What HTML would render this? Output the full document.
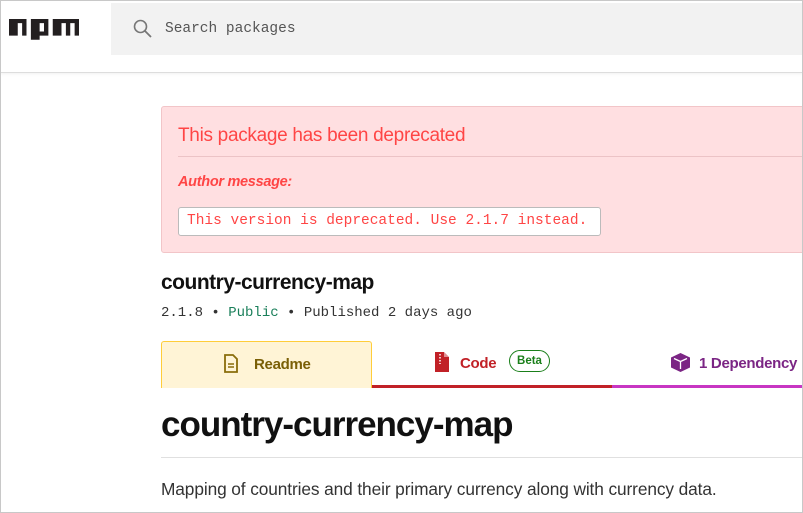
<!DOCTYPE html>
<html><head><meta charset="utf-8"><style>
*{margin:0;padding:0;box-sizing:border-box}
html,body{width:803px;height:513px;overflow:hidden;background:#fff;font-family:"Liberation Sans",sans-serif}
.frame{position:absolute;left:0;top:0;width:803px;height:513px;border:1px solid #c8c8c8;pointer-events:none;z-index:10}
.hdr{position:absolute;left:0;top:0;width:803px;height:73px;border-bottom:1px solid #ddd;box-shadow:0 1px 3px rgba(0,0,0,.06)}
.search{position:absolute;left:111px;top:3px;width:692px;height:52px;background:#f2f2f2}
.search span{position:absolute;left:54px;top:18px;font-family:"Liberation Mono",monospace;font-size:14.5px;color:#555}
.dep{position:absolute;left:161px;top:106px;width:660px;height:147px;background:#ffdfe1;border:1px solid #f2c5c8;border-radius:3px}
.dep h3{position:absolute;left:16px;top:18px;font-weight:normal;font-size:19px;color:#ff4545;letter-spacing:-.3px}
.dep .hr{position:absolute;left:16px;top:49px;right:0;border-top:1px solid #ecc3c6}
.dep .am{position:absolute;left:16px;top:67px;font-style:italic;font-weight:bold;font-size:14.5px;color:#ff4545;letter-spacing:-.3px}
.dep .code{position:absolute;left:16px;top:100px;width:423px;height:29px;background:#fff;border:1px solid #bbb;border-radius:3px;font-family:"Liberation Mono",monospace;font-size:14.5px;color:#ff4545;padding:5px 0 0 8px;white-space:nowrap}
.t1{position:absolute;left:161px;top:271px;font-weight:bold;font-size:21px;color:#111;letter-spacing:-.5px}
.meta{position:absolute;left:161px;top:305px;font-family:"Liberation Mono",monospace;font-size:14px;color:#333;white-space:nowrap}
.tab{position:absolute;top:341px;height:47px}
.readme{left:161px;width:211px;background:#fff4d6;border:1px solid #ffcd3a;border-bottom:none;border-radius:3px 3px 0 0}
.code-t{left:372px;width:240px;border-bottom:3px solid #c12127}
.dep-t{left:612px;width:191px;border-bottom:3px solid #c836c3}
.lbl{position:absolute;top:14px;font-weight:bold;font-size:15px;letter-spacing:-.3px}
.beta{position:absolute;left:137px;top:9px;width:41px;height:22px;border:1.5px solid #1a7f1a;border-radius:11px;color:#1a7f1a;font-size:11.5px;font-weight:bold;display:flex;align-items:center;justify-content:center}
.h1{position:absolute;left:161px;top:405px;font-weight:bold;font-size:35px;color:#111;letter-spacing:-1px}
.hr2{position:absolute;left:161px;top:457px;width:642px;border-top:1px solid #e0e0e0}
.p{position:absolute;left:161px;top:479px;font-size:17.3px;color:#333;letter-spacing:-.1px;white-space:nowrap}
</style></head><body>
<div class="hdr">
<svg style="position:absolute;left:9px;top:19px" width="70" height="22" viewBox="1 1 16 5.3" preserveAspectRatio="none"><path fill="#231f20" fill-rule="evenodd" d="M1,5h2V2h1v3h1V1H1z M6,1v5h2V5h2V1z M8,2h1v2H8z M11,1v4h2V2h1v3h1V2h1v3h1V1z"/></svg>
<div class="search">
<svg style="position:absolute;left:22px;top:16px" width="19" height="19" viewBox="0 0 19 19"><circle cx="7.5" cy="7.5" r="6" fill="none" stroke="#777" stroke-width="1.6"/><path d="M12 12l6 6" stroke="#777" stroke-width="1.8"/></svg>
<span>Search packages</span></div>
</div>
<div class="dep"><h3>This package has been deprecated</h3><div class="hr"></div><div class="am">Author message:</div><div class="code">This version is deprecated. Use 2.1.7 instead.</div></div>
<div class="t1">country-currency-map</div>
<div class="meta">2.1.8 • <span style="color:#1a7f5a">Public</span> • Published 2 days ago</div>
<div class="tab readme">
<svg style="position:absolute;left:62px;top:12px" width="14" height="19" viewBox="0 0 14 19"><path d="M1 1h8l4 4v13H1z" fill="none" stroke="#8a6d0b" stroke-width="1.8"/><path d="M4 10h6M4 13h6" stroke="#8a6d0b" stroke-width="1.6"/></svg>
<span class="lbl" style="left:92px;color:#7a5f06">Readme</span></div>
<div class="tab code-t">
<svg style="position:absolute;left:63px;top:11px" width="14" height="20" viewBox="0 0 14 20"><path d="M0 0h9l5 5v15H0z" fill="#c12127"/><path d="M9 0v5h5" fill="#fff" opacity=".5"/><path d="M5 2v10" stroke="#fff" stroke-width="1.5" stroke-dasharray="1.5 1.5"/></svg>
<span class="lbl" style="left:88px;color:#c12127">Code</span><div class="beta">Beta</div></div>
<div class="tab dep-t">
<svg style="position:absolute;left:59px;top:12px" width="19" height="19" viewBox="0 0 19 19"><path d="M9.5 0L19 4.5v10L9.5 19 0 14.5v-10z" fill="#7b2584"/><path d="M3 5.5l6.5 3 6.5-3M9.5 8.5V16" stroke="#fff" stroke-width="1.3" fill="none"/></svg>
<span class="lbl" style="left:87px;color:#7b2584">1 Dependency</span></div>
<div class="h1">country-currency-map</div>
<div class="hr2"></div>
<div class="p">Mapping of countries and their primary currency along with currency data.</div>
<div class="frame"></div>
</body></html>
